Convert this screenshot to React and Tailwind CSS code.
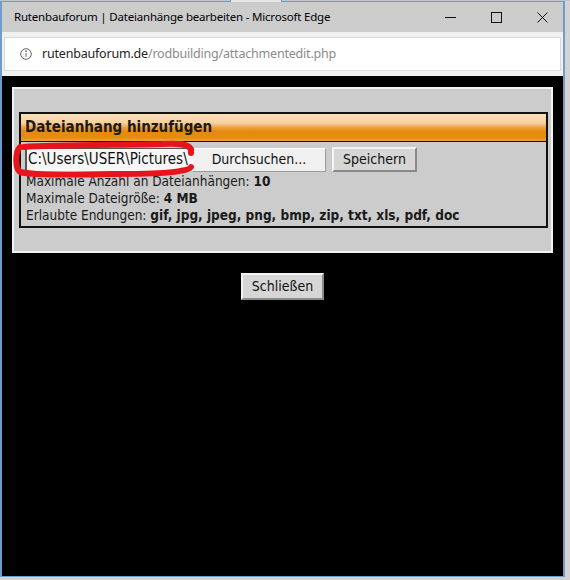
export default function App() {
  const tahoma = { fontFamily: '"DejaVu Sans Condensed", "DejaVu Sans", sans-serif' }
  return (
    <div className="w-[570px] h-[580px] bg-[#d3d3d3] overflow-hidden relative">
      <div className="h-[1px] bg-[#b9c6d4]"></div>
      <div className="absolute left-[230px] top-0 w-[52px] h-[3px] border-x border-b border-[#8a8a8a] bg-[#e6e6e6]"></div>
      <div className="w-[565px] h-[576px] border-x-2 border-t border-b border-[#6d9ccd] flex flex-col">
        {/* title bar */}
        <div className="h-[30px] shrink-0 bg-[#cccccc] flex items-center relative" style={{ fontFamily: '"Noto Sans", sans-serif' }}>
          <span className="pl-[12px] text-[11.5px] text-black tracking-[-0.2px]">Rutenbauforum | Dateianhänge bearbeiten - Microsoft Edge</span>
          <svg className="absolute left-[443px] top-0" width="120" height="30" viewBox="0 0 120 30" fill="none" stroke="#111" strokeWidth="1">
            <line x1="0" y1="15.5" x2="11" y2="15.5" />
            <rect x="46.5" y="10.5" width="10" height="10" />
            <line x1="92.5" y1="10.5" x2="102.5" y2="20.5" />
            <line x1="102.5" y1="10.5" x2="92.5" y2="20.5" />
          </svg>
        </div>
        {/* address */}
        <div className="h-[44px] shrink-0 bg-[#f0f0f0] pt-[5px] px-[2px]">
          <div className="h-[34px] bg-white border border-[#d9d9d9] flex items-center" style={{ fontFamily: '"Noto Sans", sans-serif' }}>
            <svg className="ml-[15px]" width="12" height="12" viewBox="0 0 12 12" fill="none" stroke="#666" strokeWidth="1">
              <circle cx="6" cy="6" r="5.3" />
              <line x1="6" y1="5" x2="6" y2="9" />
              <circle cx="6" cy="3.2" r="0.5" fill="#666" />
            </svg>
            <span className="ml-[10px] text-[12.5px] tracking-[-0.2px] text-[#222]">rutenbauforum.de<span className="text-[#8a8a8a]">/rodbuilding/attachmentedit.php</span></span>
          </div>
        </div>
        {/* page */}
        <div className="flex-1 bg-black pt-[11px]" style={tahoma}>
          <div className="ml-[10px] w-[541px] h-[166px] border-2 border-[#f2f2f2] bg-[#cccccc] pt-[23px] pl-[5px]">
            <div className="w-[529px] h-[116px] border-2 border-[#111] relative">
              <div className="h-[28px] border-b border-[#111] flex items-center pl-[4px] bg-[linear-gradient(to_bottom,#fbe0ba_0%,#f6cf9a_35%,#eea040_50%,#e58a0c_65%,#e68c10_88%,#efa43c_100%)]">
                <span className="text-[15px] font-bold text-[#1a1a1a]">Dateianhang hinzufügen</span>
              </div>
              <div className="pl-[4px] pt-[5px]">
                <div className="flex items-center h-[25px]">
                  <div className="w-[167px] h-[24px] bg-[#f6f6f6] border-l-2 border-t border-[#555] border-b border-b-[#ddd] overflow-hidden whitespace-nowrap flex items-center">
                    <span className="text-[15px] text-[#111] pl-[1px]">C:\Users\USER\Pictures\</span>
                  </div>
                  <button className="w-[134px] h-[24px] bg-[#f0f0f0] border-r border-b border-[#9a9a9a] border-t border-l border-t-white border-l-white text-[14px] text-[#111]">Durchsuchen...</button>
                  <button className="ml-[6px] w-[85px] h-[25px] bg-[#d6d6d6] border-2 border-t-[#f4f4f4] border-l-[#f4f4f4] border-r-[#8a8a8a] border-b-[#8a8a8a] text-[14px] text-[#111]">Speichern</button>
                </div>
                <div className="mt-[1px] text-[13.5px] leading-[17px] text-[#1a1a1a] pl-[1px]">
                  <div>Maximale Anzahl an Dateianhängen: <b>10</b></div>
                  <div>Maximale Dateigröße: <b>4 MB</b></div>
                  <div>Erlaubte Endungen: <b>gif, jpg, jpeg, png, bmp, zip, txt, xls, pdf, doc</b></div>
                </div>
              </div>
              <svg className="absolute left-[-9px] top-[26px] pointer-events-none" width="185" height="40" viewBox="0 0 185 40" fill="none" stroke="#e8141c" strokeWidth="6" strokeLinecap="round" strokeLinejoin="round">
                <path d="M12 7 C 40 5, 110 5, 150 4 C 168 3, 176 4, 179 9 L 179 13 M 179 27 C 177 32, 150 34, 100 34 C 60 35, 20 35, 8 32 C 3 28, 3 12, 8 7" />
              </svg>
            </div>
          </div>
          <div className="flex justify-center pt-[20px]">
            <button className="w-[83px] h-[27px] bg-[#d6d6d6] border-2 border-t-[#f4f4f4] border-l-[#f4f4f4] border-r-[#8a8a8a] border-b-[#8a8a8a] text-[14px] text-[#111]">Schließen</button>
          </div>
        </div>
      </div>
    </div>
  )
}
